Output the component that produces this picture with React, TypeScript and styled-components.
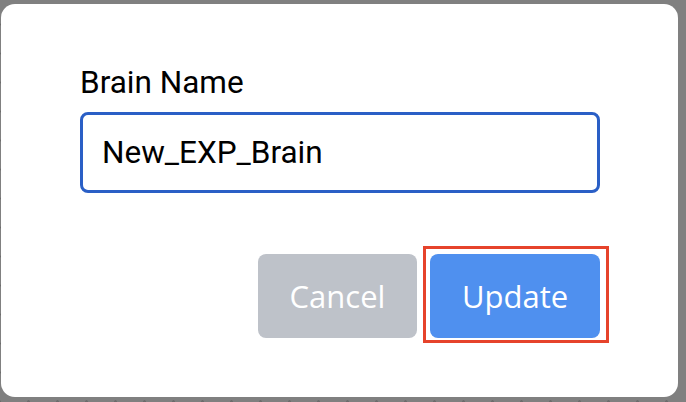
import React, { useState } from "react";
import styled, { createGlobalStyle } from "styled-components";

const GlobalStyle = createGlobalStyle`
	html, body {
		margin: 0;
		padding: 0;
		width: 686px;
		height: 402px;
		overflow: hidden;
		background-color: #808080;
		background-image: radial-gradient(circle, #6c6c6c 1px, transparent 1.6px);
		background-size: 29px 29px;
		background-position: 14px 10px;
	}
	* {
		box-sizing: border-box;
	}
`;

const App = () => {
	const [name, setName] = useState("New_EXP_Brain");
	return (
		<>
			<GlobalStyle />
			<Modal>
				<Field>
					<Label htmlFor="brain-name">Brain Name</Label>
					<Input
						id="brain-name"
						value={name}
						onChange={(e) => setName(e.target.value)}
					/>
				</Field>
				<Actions>
					<Button variant="cancel">Cancel</Button>
					<Highlight>
						<Button variant="primary">Update</Button>
					</Highlight>
				</Actions>
			</Modal>
		</>
	);
};

const Modal = styled.div`
	width: 677px;
	height: 393px;
	margin: 4px 0 0 1px;
	padding: 60px 78px 0 79px;
	background: #fff;
	border-radius: 14px;
	display: flex;
	flex-direction: column;
`;

const Field = styled.div`
	display: flex;
	flex-direction: column;
	gap: 11px;
`;

const Label = styled.label`
	font-family: Roboto, "Liberation Sans", sans-serif;
	font-size: 31.5px;
	line-height: 37px;
	color: #000;
	padding-left: 0;
`;

const Input = styled.input`
	width: 520px;
	height: 81px;
	border: 3px solid #2a5fc6;
	border-radius: 8px;
	padding: 0 19px;
	font-family: Roboto, "Liberation Sans", sans-serif;
	font-size: 31.5px;
	color: #000;
	outline: none;
	background: #fff;
`;

const Actions = styled.div`
	display: flex;
	justify-content: flex-end;
	gap: 13px;
	margin-top: 61px;
`;

const Highlight = styled.div`
	position: relative;
	display: flex;

	&::after {
		content: "";
		position: absolute;
		top: -8px;
		left: -7px;
		right: -9px;
		bottom: -5px;
		border: 3px solid #e6432b;
		pointer-events: none;
	}
`;

const Button = styled.button<{ variant: "cancel" | "primary" }>`
	height: 84px;
	width: ${(p) => (p.variant === "cancel" ? "159px" : "170px")};
	border: none;
	border-radius: 8px;
	background: ${(p) => (p.variant === "cancel" ? "#bec2c9" : "#4f90ef")};
	color: #fff;
	font-family: "Open Sans", "Noto Sans", sans-serif;
	font-size: 31px;
	padding: 0;
	cursor: pointer;
`;

export default App;
